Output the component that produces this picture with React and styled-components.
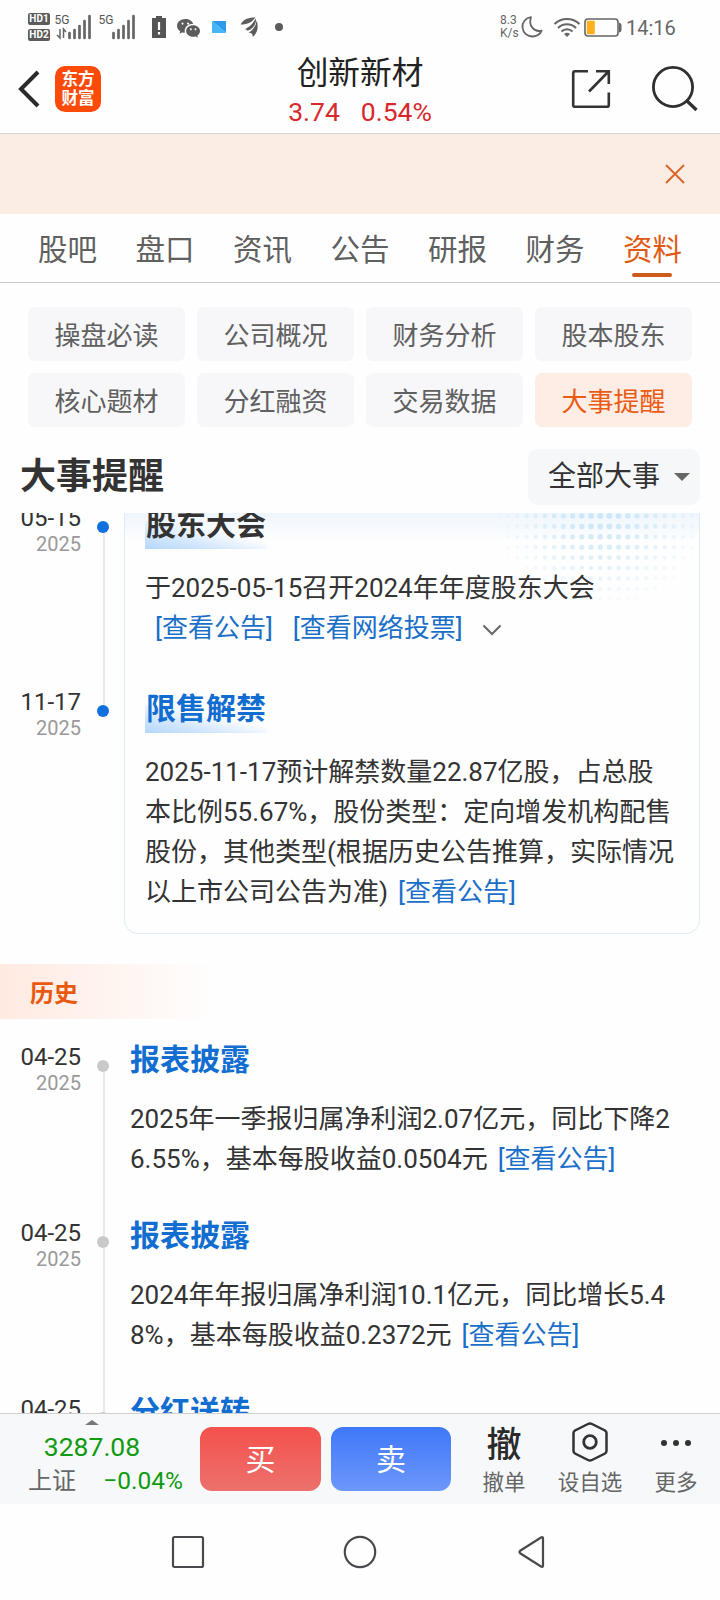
import styled, { createGlobalStyle } from "styled-components";
import { BsWechat } from "react-icons/bs";

const tabs = ["股吧", "盘口", "资讯", "公告", "研报", "财务", "资料"];

const chips = [
  "操盘必读", "公司概况", "财务分析", "股本股东",
  "核心题材", "分红融资", "交易数据", "大事提醒",
];

const upcoming = [
  {
    date: "05-15",
    year: "2025",
    title: "股东大会",
    lines: ["于2025-05-15召开2024年年度股东大会"],
    links: ["[查看公告]", "[查看网络投票]"],
    expandable: true,
  },
  {
    date: "11-17",
    year: "2025",
    title: "限售解禁",
    blue: true,
    lines: [
      "2025-11-17预计解禁数量22.87亿股，占总股",
      "本比例55.67%，股份类型：定向增发机构配售",
      "股份，其他类型(根据历史公告推算，实际情况",
      "以上市公司公告为准)",
    ],
    inlineLink: "[查看公告]",
  },
];

const history = [
  {
    date: "04-25",
    year: "2025",
    title: "报表披露",
    lines: ["2025年一季报归属净利润2.07亿元，同比下降2", "6.55%，基本每股收益0.0504元"],
    inlineLink: "[查看公告]",
  },
  {
    date: "04-25",
    year: "2025",
    title: "报表披露",
    lines: ["2024年年报归属净利润10.1亿元，同比增长5.4", "8%，基本每股收益0.2372元"],
    inlineLink: "[查看公告]",
  },
  { date: "04-25", title: "分红送转", lines: [] },
];

const Signal = ({ arrows }) => (
  <svg width="38" height="28" viewBox="0 0 38 28">
    <text x="-0.500" y="11" fontSize="12" fontFamily="Roboto, sans-serif" fill="#555">5G</text>
    {arrows && (
      <path d="M5 16V25L2 22M8.500 25V16L11 19" fill="none" stroke="#666" strokeWidth="1.5" />
    )}
    {[5, 8, 12, 17, 22].map((h, i) => (
      <path key={h} d={`M${14.500 + i * 5} 25V${25 - h}`} stroke="#666" strokeWidth="2.700" strokeLinecap="round" />
    ))}
  </svg>
);

// halftone decoration in the corner of the card, fading out from its centre
const Halftone = () => {
  const dots = [];
  for (let row = 0; row < 10; row++) {
    for (let col = 0; col < 22; col++) {
      const x = 5 + col * 9.2;
      const y = 3 + row * 10.4;
      const fade = 1 - Math.hypot((x - 107) / 112, y / 103);
      if (fade > 0) {
        dots.push(<circle key={`${row}-${col}`} cx={x} cy={y} r={1.8 + fade * 1.2} opacity={Math.min(0.65, fade * 0.8)} />);
      }
    }
  }
  return <HalftoneSvg width="205" height="110" fill="#b9dff4">{dots}</HalftoneSvg>;
};

const Times = ({ events, top, step, color, openEnded }) => (
  <TimeColumn>
    {events.map((event, i) => (
      <TimeSlot key={i} $step={step}>
        <DateBox>
          <Day>{event.date}</Day>
          {event.year && <Year>{event.year}</Year>}
        </DateBox>
        <Rail>
          <RailLine $height={top} $visible={i > 0} />
          <Dot $color={color} />
          <RailLine $visible={openEnded || i < events.length - 1} />
        </Rail>
      </TimeSlot>
    ))}
  </TimeColumn>
);

const Event = ({ event, step, highlight }) => (
  <EventBox $step={step} $highlight={highlight}>
    <EventTitle $blue={event.blue || !highlight} $highlight={highlight}>{event.title}</EventTitle>
    <EventText $highlight={highlight}>
      {event.lines.map((line, i) => (
        <p key={line}>
          {line}
          {event.inlineLink && i === event.lines.length - 1 && <InlineLink>{event.inlineLink}</InlineLink>}
        </p>
      ))}
      {event.links && (
        <LinkRow>
          {event.links.map((link) => <a key={link}>{link}</a>)}
          {event.expandable && (
            <svg width="20" height="12" viewBox="0 0 20 12" fill="none" stroke="#666" strokeWidth="2">
              <path d="M1.500 1.500L10 10L18.500 1.500" />
            </svg>
          )}
        </LinkRow>
      )}
    </EventText>
  </EventBox>
);

const App = () => {
  return (
    <>
      <GlobalStyle />
      <Screen>
        <StatusBar>
          <StatusLeft>
            <HdStack>
              <span>HD1</span>
              <span>HD2</span>
            </HdStack>
            <Signal arrows />
            <Signal />
            <svg width="14" height="22" viewBox="0 0 14 22">
              <path d="M0 2H4V0H10V2H14V22H0Z" fill="#555" />
              <path d="M7 6V14M7 16V18.500" stroke="#fff" strokeWidth="2.2" />
            </svg>
            <BsWechat size={23} color="#5c5c5c" />
            <svg width="16" height="14" viewBox="0 0 16 14">
              <path d="M1 1H15V13Z" fill="#2e9bea" />
              <path d="M1 1L15 13H1Z" fill="#45b6f5" />
            </svg>
            <svg width="19" height="22" viewBox="0 0 19 22" fill="#5c5c5c">
              <path d="M0.500 8.500C3 4 7 1.500 15.500 1.500C12 6 8 8.500 0.500 8.500Z" />
              <path d="M3.500 13.500C10 11.500 13 7 15.800 2.500C17 6.500 13 14 7 14.800C7 13.500 5.500 13 3.500 13.500Z" />
              <path d="M8.500 16.800C13 14.500 16 10 16.500 4.500C19 10 17.500 18 12.500 20.800C13 18 11.500 16.500 8.500 16.800Z" />
            </svg>
            <StatusDot />
          </StatusLeft>
          <StatusRight>
            <Speed>
              <span>8.3</span>
              <span>K/s</span>
            </Speed>
            <svg width="22" height="22" viewBox="0 0 22 22" fill="none" stroke="#666" strokeWidth="1.8" strokeLinejoin="round">
              <path d="M10 1.200C4.500 2 1 6.500 1.500 11.500C2 17 6.500 20.700 12 20.500C16 20.200 19.300 18 20.600 14.600C13.500 16.500 7 10 10 1.200Z" />
            </svg>
            <svg width="28" height="21" viewBox="0 0 28 21" fill="none" stroke="#666" strokeWidth="2">
              <path d="M1.500 7C8.500 0.300 19.500 0.300 26.500 7M5 11C10 6 18 6 23 11M8.500 14.500C11.500 11.500 16.500 11.500 19.500 14.500" />
              <path d="M11 17Q14 14.500 17 17L14 20Z" fill="#666" stroke="none" />
            </svg>
            <svg width="38" height="19" viewBox="0 0 38 19">
              <rect x="1" y="1" width="33" height="17" rx="3" fill="none" stroke="#666" strokeWidth="1.6" />
              <rect x="2.800" y="2.800" width="8" height="13.400" rx="1" fill="#fbb01c" />
              <path d="M35 4.500Q37.500 5 37.500 7V12Q37.500 14 35 14.500Z" fill="#666" />
            </svg>
            <Clock>14:16</Clock>
          </StatusRight>
        </StatusBar>

        <Header>
          <HeaderSide>
            <svg width="22" height="38" viewBox="0 0 22 38" fill="none" stroke="#2b2b2b" strokeWidth="4">
              <path d="M20 2L3 19L20 36" />
            </svg>
            <Logo>
              <span>东方</span>
              <span>财富</span>
            </Logo>
          </HeaderSide>
          <HeaderTitle>
            <h1>创新新材</h1>
            <Quote>
              <span>3.74</span>
              <span>0.54%</span>
            </Quote>
          </HeaderTitle>
          <HeaderSide $end>
            <svg width="40" height="40" viewBox="0 0 40 40" fill="none" stroke="#333" strokeWidth="2.600">
              <path d="M17 2.200H4Q2.200 2.200 2.200 4V36Q2.200 37.800 4 37.800H36Q37.800 37.800 37.800 36V23.500M25 2.200H37.800V15M37 3L18 22.500" />
            </svg>
            <svg width="46" height="46" viewBox="0 0 46 46" fill="none" stroke="#2f2f2f" strokeWidth="2.800">
              <circle cx="21" cy="21" r="19.600" />
              <path d="M34.500 34.500L44.500 44" strokeWidth="3.200" />
            </svg>
          </HeaderSide>
        </Header>

        <Banner>
          <svg width="20" height="20" viewBox="0 0 20 20" stroke="#d9662a" strokeWidth="2">
            <path d="M1 1L19 19M19 1L1 19" />
          </svg>
        </Banner>

        <Tabs>
          {tabs.map((tab) => (
            <Tab key={tab} $active={tab === "资料"}>{tab}</Tab>
          ))}
        </Tabs>

        <ChipGrid>
          {chips.map((chip) => (
            <Chip key={chip} $active={chip === "大事提醒"}>{chip}</Chip>
          ))}
        </ChipGrid>

        <TitleRow>
          <h2>大事提醒</h2>
          <Select>
            全部大事
            <Caret />
          </Select>
        </TitleRow>

        <Feed>
          <Upcoming>
            <Times events={upcoming} top={20} step={184} color="#0f6fdc" />
            <Card>
              <Halftone />
              {upcoming.map((event) => (
                <Event key={event.title} event={event} step={184} highlight />
              ))}
            </Card>
          </Upcoming>
          <HistoryLabel>历史</HistoryLabel>
          <HistoryList>
            <Times events={history} top={20} step={176} color="#c9c9c9" openEnded />
            <HistoryBody>
              {history.map((event, i) => (
                <Event key={i} event={event} step={176} />
              ))}
            </HistoryBody>
          </HistoryList>
        </Feed>

        <Toolbar>
          <Index>
            <UpCaret />
            <IndexValue>3287.08</IndexValue>
            <IndexRow>
              <IndexName>上证</IndexName>
              <span>−0.04%</span>
            </IndexRow>
          </Index>
          <Trade $from="#f4514c" $to="#ec716d">买</Trade>
          <Trade $from="#3f78f8" $to="#6d98fb">卖</Trade>
          <Actions>
            <Action>
              <ActionGlyph $text>撤</ActionGlyph>
              撤单
            </Action>
            <Action>
              <ActionGlyph>
                <svg width="36" height="40" viewBox="0 0 36 40" fill="none" stroke="#333" strokeWidth="2.500">
                  <path d="M16 2Q18 1 20 2L33 8.500Q34.500 9.500 34.500 11V29Q34.500 30.500 33 31.500L20 38Q18 39 16 38L3 31.500Q1.500 30.500 1.500 29V11Q1.500 9.500 3 8.500Z" />
                  <circle cx="18" cy="20" r="6.300" strokeWidth="2.800" />
                </svg>
              </ActionGlyph>
              设自选
            </Action>
            <Action>
              <ActionGlyph>
                <svg width="32" height="10" viewBox="0 0 32 10" fill="#333">
                  <circle cx="4" cy="6" r="3" />
                  <circle cx="16" cy="6" r="3" />
                  <circle cx="28" cy="6" r="3" />
                </svg>
              </ActionGlyph>
              更多
            </Action>
          </Actions>
        </Toolbar>

        <NavBar>
          <svg width="34" height="34" viewBox="0 0 34 34">
            <rect x="2" y="2" width="30" height="30" rx="1.500" />
          </svg>
          <svg width="34" height="34" viewBox="0 0 34 34">
            <circle cx="17" cy="17" r="15.200" />
          </svg>
          <svg width="34" height="34" viewBox="0 0 34 34">
            <path d="M5.500 15.500L26 2.500Q28 1.500 28 3.500V30.500Q28 32.500 26 31.500L5.500 18.500Q3.500 17 5.500 15.500Z" />
          </svg>
        </NavBar>
      </Screen>
    </>
  );
};

const GlobalStyle = createGlobalStyle`
  * {
    box-sizing: border-box;
    margin: 0;
    padding: 0;
  }

  body {
    background: #fdfdfd;
    font-family: Roboto, "Noto Sans CJK SC", sans-serif;
    color: #333;
  }

  svg {
    display: block;
    flex: none;
  }
`;

const Screen = styled.div`
  display: flex;
  flex-direction: column;
  width: 720px;
  height: 1600px;
  overflow: hidden;
  background: #fefefe;
`;

const StatusBar = styled.div`
  display: flex;
  justify-content: space-between;
  height: 54px;
  padding: 0 44px 0 28px;
  color: #666;
`;

const StatusLeft = styled.div`
  display: flex;
  align-items: center;

  > svg:nth-of-type(1) { margin-left: 5px; }
  > svg:nth-of-type(2) { margin-left: 6px; }
  > svg:nth-of-type(3) { margin-left: 15px; }
  > svg:nth-of-type(4) { margin-left: 11px; }
  > svg:nth-of-type(5) { margin-left: 11px; }
  > svg:nth-of-type(6) { margin-left: 13px; }
`;

const HdStack = styled.div`
  display: flex;
  flex-direction: column;
  gap: 4px;

  span {
    width: 22px;
    height: 12px;
    border-radius: 2px;
    background: #5c5c5c;
    color: #fff;
    font-size: 10px;
    font-weight: 700;
    line-height: 12px;
    text-align: center;
  }
`;

const StatusDot = styled.i`
  width: 8px;
  height: 8px;
  margin-left: 16px;
  border-radius: 50%;
  background: #5c5c5c;
`;

const StatusRight = styled.div`
  display: flex;
  align-items: center;

  > svg:nth-of-type(1) { margin-left: 3px; }
  > svg:nth-of-type(2) { margin-left: 10px; }
  > svg:nth-of-type(3) { margin-left: 3px; }
`;

const Speed = styled.div`
  display: flex;
  flex-direction: column;
  width: 18px;
  font-size: 12px;
  line-height: 13px;
`;

const Clock = styled.span`
  width: 50px;
  margin-left: 4px;
  font-size: 20px;
  line-height: 28px;
  padding-top: 2px;
  white-space: nowrap;
`;

const Header = styled.header`
  display: flex;
  justify-content: space-between;
  height: 80px;
  padding: 0 22px 0 18px;
  border-bottom: 1px solid #d8d4d2;
`;

const HeaderSide = styled.div`
  display: flex;
  align-items: center;
  justify-content: ${({ $end }) => ($end ? "flex-end" : "flex-start")};
  gap: ${({ $end }) => ($end ? "41px" : "15px")};
  width: 190px;
  height: 70px;
`;

const Logo = styled.div`
  display: flex;
  flex-direction: column;
  align-items: center;
  justify-content: center;
  width: 46px;
  height: 46px;
  border-radius: 10px;
  background: #fc4a08;
  color: #fff;
  font-size: 16.5px;
  font-weight: 700;
  line-height: 19px;
`;

const HeaderTitle = styled.div`
  display: flex;
  flex-direction: column;
  align-items: center;
  padding-left: 4px;

  h1 {
    height: 38px;
    color: #222;
    font-size: 31.700px;
    font-weight: 400;
    line-height: 39px;
  }
`;

const Quote = styled.div`
  display: flex;
  gap: 21px;
  color: #d8282c;
  font-size: 26.500px;
  line-height: 39px;
`;

const Banner = styled.div`
  display: flex;
  align-items: center;
  justify-content: flex-end;
  height: 80px;
  padding-right: 35px;
  background: #fcede4;
`;

const Tabs = styled.nav`
  display: flex;
  justify-content: space-between;
  height: 69px;
  padding: 0 38px;
  border-bottom: 1px solid #ccc;
`;

const Tab = styled.div`
  display: flex;
  flex-direction: column;
  align-items: center;
  color: ${({ $active }) => ($active ? "#e05a14" : "#606060")};
  font-size: 29.500px;
  line-height: 72px;
  height: 68px;

  &::after {
    content: "";
    flex: none;
    width: 40px;
    height: 4px;
    margin-top: -13px;
    border-radius: 2px;
    background: ${({ $active }) => ($active ? "#d0591c" : "transparent")};
  }
`;

const ChipGrid = styled.div`
  display: grid;
  grid-template-columns: repeat(4, 157px);
  grid-auto-rows: 54px;
  gap: 12px;
  padding: 24px 28px 22px;
`;

const Chip = styled.div`
  border-radius: 7px;
  background: ${({ $active }) => ($active ? "#feede5" : "#f7f7fa")};
  color: ${({ $active }) => ($active ? "#ea5b14" : "#606060")};
  font-size: 26px;
  line-height: 59px;
  text-align: center;
`;

const TitleRow = styled.div`
  display: flex;
  align-items: center;
  justify-content: space-between;
  height: 64px;
  padding: 0 20px 8px;

  h2 {
    font-size: 36px;
    font-weight: 700;
    line-height: 56px;
  }
`;

const Select = styled.div`
  display: flex;
  align-items: center;
  justify-content: space-between;
  width: 172px;
  height: 56px;
  padding: 0 10px 0 20px;
  border-radius: 10px;
  background: #f6f7f9;
  font-size: 28px;
  line-height: 54px;
`;

const Caret = styled.i`
  border: 8px solid transparent;
  border-top-color: #666;
  border-bottom: 0;
`;

const Feed = styled.main`
  height: 900px;
  overflow: hidden;
`;

const Upcoming = styled.section`
  display: flex;
  height: 439px;
  margin-top: -18px;
`;

const TimeColumn = styled.div`
  flex: none;
  width: 124px;
`;

const TimeSlot = styled.div`
  display: flex;
  height: ${({ $step }) => $step}px;
`;

const DateBox = styled.div`
  flex: none;
  width: 81px;
  padding-top: 9px;
  text-align: right;
`;

const Day = styled.div`
  font-size: 24px;
  line-height: 28px;
`;

const Year = styled.div`
  color: #999;
  font-size: 20px;
  line-height: 24px;
`;

const Rail = styled.div`
  display: flex;
  flex: none;
  flex-direction: column;
  align-items: center;
  width: 44px;
`;

const RailLine = styled.i`
  flex: ${({ $height }) => ($height ? `0 0 ${$height + 6}px` : "1")};
  width: 2px;
  margin-left: 1px;
  background: ${({ $visible }) => ($visible ? "#e9e9e9" : "transparent")};
`;

const Dot = styled.i`
  flex: none;
  width: 12px;
  height: 12px;
  border-radius: 50%;
  background: ${({ $color }) => $color};
`;

const Card = styled.div`
  position: relative;
  width: 576px;
  padding-left: 20px;
  border: 1px solid #dfeaf2;
  border-radius: 14px;
  background: linear-gradient(#eaf3fd, #eff6fd 18px, #fefefe 46px);
`;

const HalftoneSvg = styled.svg`
  position: absolute;
  top: 17px;
  right: 0;
`;

const EventBox = styled.article`
  position: relative;
  height: ${({ $step }) => $step}px;
  padding-top: ${({ $highlight }) => ($highlight ? 14 : 11)}px;
`;

const EventTitle = styled.h3`
  display: inline-block;
  height: 39px;
  padding: 0 1px;
  background: ${({ $highlight }) =>
    $highlight ? "linear-gradient(to top right, #b5d7fb, #d3e7fd 30%, #fefefe00 62%)" : "none"};
  background-size: 100% 28px;
  background-position: bottom;
  background-repeat: no-repeat;
  color: ${({ $blue }) => ($blue ? "#116dcf" : "#333")};
  font-size: 30px;
  font-weight: 700;
  line-height: 30px;
`;

const EventText = styled.div`
  padding-top: ${({ $highlight }) => ($highlight ? 19 : 15)}px;
  font-size: 26px;
  line-height: 40px;
  white-space: nowrap;
`;

const InlineLink = styled.a`
  margin-left: 10px;
  color: #1a6fc9;
`;

const LinkRow = styled.div`
  display: flex;
  align-items: center;
  gap: 20px;
  padding-left: 10px;
  color: #1a6fc9;

  svg {
    margin: 4px 0 0 -1px;
  }
`;

const HistoryLabel = styled.div`
  width: 215px;
  height: 55px;
  margin-top: 30px;
  padding-left: 30px;
  background: linear-gradient(to right, #ffeae1, #fefefe);
  color: #e85a12;
  font-size: 24px;
  font-weight: 700;
  line-height: 60px;
`;

const HistoryList = styled.section`
  display: flex;
  margin-top: 15px;
`;

const HistoryBody = styled.div`
  padding-left: 5px;

  p {
    padding-left: 1px;
  }
`;

const Toolbar = styled.footer`
  display: flex;
  gap: 10px;
  height: 91px;
  padding: 13px 0 0;
  border-top: 1px solid #cfd0d3;
  background: #f6f8fa;
`;

const Index = styled.div`
  display: flex;
  flex-direction: column;
  align-items: center;
  width: 190px;
  margin-top: -7px;
  color: #109a10;
`;

const UpCaret = styled.i`
  margin-right: 6px;
  border: 7px solid transparent;
  border-bottom: 5px solid #777;
  border-top: 0;
`;

const IndexValue = styled.div`
  margin: 4px 6px 0 0;
  font-size: 26.500px;
  line-height: 35px;
`;

const IndexRow = styled.div`
  display: flex;
  justify-content: space-between;
  width: 100%;
  padding: 0 7px 0 28px;
  font-size: 24.500px;
  line-height: 34px;
`;

const IndexName = styled.span`
  color: #666;
  font-size: 24px;
`;

const Trade = styled.button`
  width: 121px;
  height: 64px;
  padding-bottom: 5px;
  border: 0;
  border-radius: 12px;
  background: linear-gradient(${({ $from, $to }) => `${$from}, ${$to}`});
  color: #fff;
  font-family: inherit;
  font-size: 30px;

  & + & {
    width: 120px;
  }
`;

const Actions = styled.div`
  display: flex;
  margin: -13px 0 0;
`;

const Action = styled.div`
  display: flex;
  flex-direction: column;
  align-items: center;
  width: 86px;
  color: #666;
  font-size: 21.500px;
  line-height: 26px;
`;

const ActionGlyph = styled.div`
  display: flex;
  align-items: center;
  height: 56px;
  padding-top: ${({ $text }) => ($text ? 8 : 0)}px;
  color: #2b2b2b;
  font-size: 35px;
  font-weight: ${({ $text }) => ($text ? 500 : 400)};
`;

const NavBar = styled.div`
  display: flex;
  flex: 1;
  align-items: center;
  justify-content: space-between;
  padding: 0 171px;

  svg {
    fill: none;
    stroke: #4a4a4e;
    stroke-width: 2.2px;
  }
`;

export default App;
